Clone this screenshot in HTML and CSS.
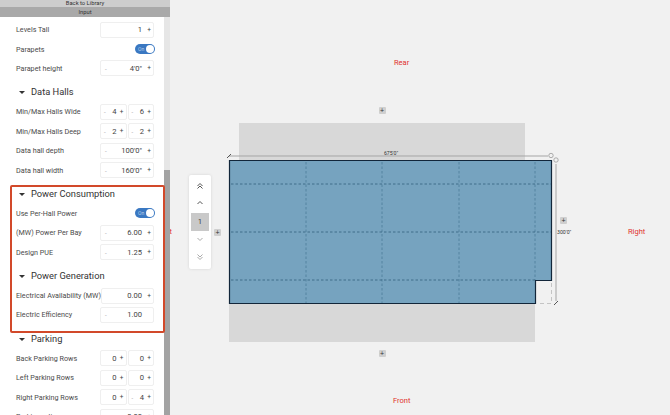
FILE: index.html
```html
<!DOCTYPE html>
<html lang="en">
<head>
  <meta charset="UTF-8" />
  <title>Layout Editor</title>
  <link rel="stylesheet" href="styles.css">
</head>
<body>
  <aside class="sidebar">
    <div class="bar-back">Back to Library</div>
    <div class="bar-input">Input</div>
    <div class="panel-wrap">
      <div class="panel">
        <div class="row">
          <span class="label">Levels Tall</span>
          <div class="stepper"><span class="minus"></span><span class="value">1</span><span class="plus">+</span></div>
        </div>
        <div class="row">
          <span class="label">Parapets</span>
          <div class="toggle"><span class="toggle-text">On</span><span class="knob"></span></div>
        </div>
        <div class="row">
          <span class="label">Parapet height</span>
          <div class="stepper"><span class="minus">-</span><span class="value">4'0"</span><span class="plus">+</span></div>
        </div>

        <h2 class="heading">Data Halls</h2>
        <div class="row">
          <span class="label">Min/Max Halls Wide</span>
          <div class="pair">
            <div class="stepper"><span class="minus">-</span><span class="value">4</span><span class="plus">+</span></div>
            <div class="stepper"><span class="minus">-</span><span class="value">6</span><span class="plus">+</span></div>
          </div>
        </div>
        <div class="row">
          <span class="label">Min/Max Halls Deep</span>
          <div class="pair">
            <div class="stepper"><span class="minus">-</span><span class="value">2</span><span class="plus">+</span></div>
            <div class="stepper"><span class="minus">-</span><span class="value">2</span><span class="plus">+</span></div>
          </div>
        </div>
        <div class="row">
          <span class="label">Data hall depth</span>
          <div class="stepper"><span class="minus">-</span><span class="value">100'0"</span><span class="plus">+</span></div>
        </div>
        <div class="row">
          <span class="label">Data hall width</span>
          <div class="stepper"><span class="minus">-</span><span class="value">160'0"</span><span class="plus">+</span></div>
        </div>

        <h2 class="heading">Power Consumption</h2>
        <div class="row">
          <span class="label">Use Per-Hall Power</span>
          <div class="toggle"><span class="toggle-text">On</span><span class="knob"></span></div>
        </div>
        <div class="row">
          <span class="label">(MW) Power Per Bay</span>
          <div class="stepper"><span class="minus">-</span><span class="value">6.00</span><span class="plus">+</span></div>
        </div>
        <div class="row">
          <span class="label">Design PUE</span>
          <div class="stepper"><span class="minus">-</span><span class="value">1.25</span><span class="plus">+</span></div>
        </div>

        <h2 class="heading">Power Generation</h2>
        <div class="row">
          <span class="label">Electrical Availability (MW)</span>
          <div class="stepper"><span class="minus"></span><span class="value">0.00</span><span class="plus">+</span></div>
        </div>
        <div class="row">
          <span class="label">Electric Efficiency</span>
          <div class="stepper"><span class="minus">-</span><span class="value">1.00</span><span class="plus"></span></div>
        </div>

        <h2 class="heading">Parking</h2>
        <div class="row">
          <span class="label">Back Parking Rows</span>
          <div class="pair">
            <div class="stepper"><span class="minus"></span><span class="value">0</span><span class="plus">+</span></div>
            <div class="stepper"><span class="minus"></span><span class="value">0</span><span class="plus">+</span></div>
          </div>
        </div>
        <div class="row">
          <span class="label">Left Parking Rows</span>
          <div class="pair">
            <div class="stepper"><span class="minus"></span><span class="value">0</span><span class="plus">+</span></div>
            <div class="stepper"><span class="minus"></span><span class="value">0</span><span class="plus">+</span></div>
          </div>
        </div>
        <div class="row">
          <span class="label">Right Parking Rows</span>
          <div class="pair">
            <div class="stepper"><span class="minus"></span><span class="value">0</span><span class="plus">+</span></div>
            <div class="stepper"><span class="minus">-</span><span class="value">4</span><span class="plus">+</span></div>
          </div>
        </div>
        <div class="row">
          <span class="label">Parking ratio</span>
          <div class="stepper"><span class="minus">-</span><span class="value">0.00</span><span class="plus">+</span></div>
        </div>
      </div>
      <div class="scrollbar"><div class="thumb"></div></div>
      <div class="callout"></div>
    </div>
  </aside>

  <main class="canvas">
    <span class="side side-rear">Rear</span>
    <span class="side side-left">Left</span>
    <span class="side side-right">Right</span>
    <span class="side side-front">Front</span>

    <svg class="drawing" width="670" height="415" viewBox="0 0 670 415">
      <rect class="setback" x="239" y="123" width="286" height="37" />
      <rect class="setback" x="229" y="303" width="306" height="39" />
      <path class="site" d="M229.5 160.5H551.5V280.5H535.5V303.5H229.5Z" />
      <path class="notch" d="M551.5 283V303.5H537" />
      <path class="grid grid-v" d="M306 162V303M382 162V303M459 162V303M535 162V280" />
      <path class="grid grid-h" d="M231 184H551M231 232H551M231 280H535" />
      <path class="dim" d="M229 156H548M556 164V301" />
      <path class="tick" d="M227 158L231 154M554 305L558 301" />
      <circle class="handle" cx="551" cy="155.5" r="2.2" />
      <circle class="handle" cx="556" cy="160" r="2.2" />
      <text class="dim-text" x="391" y="155" text-anchor="middle">675'0"</text>
      <text class="dim-text" x="557" y="234">300'0"</text>
    </svg>

    <button class="add add-top">+</button>
    <button class="add add-left">+</button>
    <button class="add add-right">+</button>
    <button class="add add-bottom">+</button>

    <div class="levels">
      <svg class="chev" width="10" height="10" viewBox="0 0 10 10"><path d="M2.5 5L5 2.5L7.5 5M2.5 7.5L5 5L7.5 7.5" /></svg>
      <svg class="chev chev-up" width="10" height="10" viewBox="0 0 10 10"><path d="M2.5 6L5 3.5L7.5 6" /></svg>
      <div class="level-current">1</div>
      <svg class="chev chev-down chev-off" width="10" height="10" viewBox="0 0 10 10"><path d="M2.5 4L5 6.5L7.5 4" /></svg>
      <svg class="chev chev-off" width="10" height="10" viewBox="0 0 10 10"><path d="M2.5 2.5L5 5L7.5 2.5M2.5 5L5 7.5L7.5 5" /></svg>
    </div>
  </main>
</body>
</html>
```

FILE: styles.css
```css
html, body {
  margin: 0;
  height: 100%;
  overflow: hidden;
}
body {
  position: relative;
  display: flex;
  width: 670px;
  height: 415px;
  background: #f1f1f1;
  font-family: Roboto, "Liberation Sans", sans-serif;
  color: #444;
}

/* left panel */
.sidebar {
  position: relative;
  z-index: 2;
  display: flex;
  flex-direction: column;
  width: 170px;
  height: 415px;
  flex: none;
}
.bar-back {
  height: 7px;
  line-height: 7px;
  background: #cdcdcd;
  text-align: center;
  font-size: 5.8px;
  color: #333;
}
.bar-input {
  height: 10px;
  line-height: 10px;
  background: #a9a9a9;
  text-align: center;
  font-size: 5.8px;
  color: #333;
}
.panel-wrap {
  position: relative;
  display: flex;
  flex: 1;
  min-height: 0;
}
.panel {
  width: 164px;
  height: 398px;
  overflow: hidden;
  box-sizing: border-box;
  padding: 3px 10px 0 16px;
  background: #fff;
  flex: none;
}
.scrollbar {
  width: 6px;
  background: #e6e6e6;
  flex: none;
}
.thumb {
  height: 245px;
  margin-top: 153px;
  background: #a3a3a3;
}
.callout {
  position: absolute;
  left: 10px;
  top: 168px;
  width: 151px;
  height: 144px;
  border: 2px solid #d2492a;
  border-radius: 2px;
}

.row {
  display: flex;
  align-items: center;
  justify-content: space-between;
  height: 19.4px;
}
.label {
  font-size: 7.2px;
  white-space: nowrap;
  color: #4a4a4a;
}
.heading {
  position: relative;
  margin: 0;
  padding-left: 15px;
  height: 24px;
  line-height: 28px;
  font-size: 9.3px;
  font-weight: 400;
  color: #333;
}
.heading::before {
  content: "";
  position: absolute;
  left: 3px;
  top: 13px;
  border-left: 3px solid transparent;
  border-right: 3px solid transparent;
  border-top: 3px solid #333;
}

.pair {
  display: flex;
  gap: 1px;
  width: 54px;
}
.stepper {
  display: flex;
  align-items: center;
  justify-content: space-between;
  box-sizing: border-box;
  width: 54px;
  height: 16px;
  padding: 0 2px 0 4px;
  border: 1px solid #efefef;
  border-radius: 2px;
  background: #fff;
  font-size: 7.6px;
  color: #444;
}
.pair .stepper {
  width: 26.5px;
  padding: 0 2px 0 3px;
}
.value {
  margin-left: auto;
  margin-right: 5px;
}
.pair .value {
  margin-right: 3px;
}
.minus {
  color: #999;
  font-size: 6px;
}
.plus {
  width: 4px;
  text-align: center;
  font-size: 6.5px;
  color: #444;
}

.toggle {
  position: relative;
  width: 20px;
  height: 10px;
  margin-right: -1px;
  border-radius: 5px;
  background: #3a78c2;
}
.toggle-text {
  position: absolute;
  left: 3px;
  top: 2px;
  font-size: 5px;
  line-height: 6px;
  color: #b7cfe9;
}
.knob {
  position: absolute;
  right: 1px;
  top: 1px;
  width: 8px;
  height: 8px;
  border-radius: 50%;
  background: #fff;
}

/* drawing area */
.canvas {
  position: absolute;
  inset: 0;
}
.drawing {
  position: absolute;
  left: 0;
  top: 0;
}
.setback { fill: #d8d8d8; }
.site {
  fill: #76a3bf;
  stroke: #12263a;
  stroke-width: 1.2;
}
.notch {
  fill: none;
  stroke: #c4c4c4;
  stroke-width: 1;
  stroke-dasharray: 4 3;
}
.grid {
  fill: none;
  stroke-width: 0.8;
  stroke-dasharray: 2.5 2;
}
.grid-v { stroke: #4d7b99; }
.grid-h { stroke: #34607d; }
.dim {
  fill: none;
  stroke: #a5a5a5;
  stroke-width: 1;
}
.tick {
  fill: none;
  stroke: #555;
  stroke-width: 1;
}
.handle {
  fill: #f1f1f1;
  stroke: #999;
  stroke-width: 0.8;
}
.dim-text {
  font-size: 5.2px;
  fill: #333;
}
.side {
  position: absolute;
  font-size: 7.5px;
  line-height: 10px;
  color: #e0312f;
}
.side-rear { left: 394px; top: 58px; }
.side-left { left: 159px; top: 227px; }
.side-right { left: 628px; top: 227px; }
.side-front { left: 393px; top: 396px; }

.add {
  position: absolute;
  width: 7px;
  height: 7px;
  padding: 0;
  border: 0;
  border-radius: 1px;
  background: #cfcfcf;
  font-size: 7px;
  line-height: 7px;
  color: #333;
}
.add-top { left: 378.5px; top: 107px; }
.add-left { left: 214px; top: 228.5px; }
.add-right { left: 560px; top: 217px; }
.add-bottom { left: 378.5px; top: 350px; }

.levels {
  position: absolute;
  left: 189px;
  top: 175px;
  display: flex;
  flex-direction: column;
  align-items: center;
  box-sizing: border-box;
  width: 22px;
  height: 94px;
  padding: 6px 2px;
  background: #fff;
  border-radius: 2px;
  box-shadow: 0 0 3px rgba(0,0,0,0.12);
}
.level-current {
  width: 18px;
  height: 18px;
  line-height: 18px;
  text-align: center;
  background: #c9c9c9;
  font-size: 7px;
  color: #333;
}
.chev-up { margin: 7px 0 5px; }
.chev-down { margin: 3px 0 8px; }
.chev path {
  fill: none;
  stroke: #555;
  stroke-width: 1;
}
.chev-off path { stroke: #aaa; }
```
